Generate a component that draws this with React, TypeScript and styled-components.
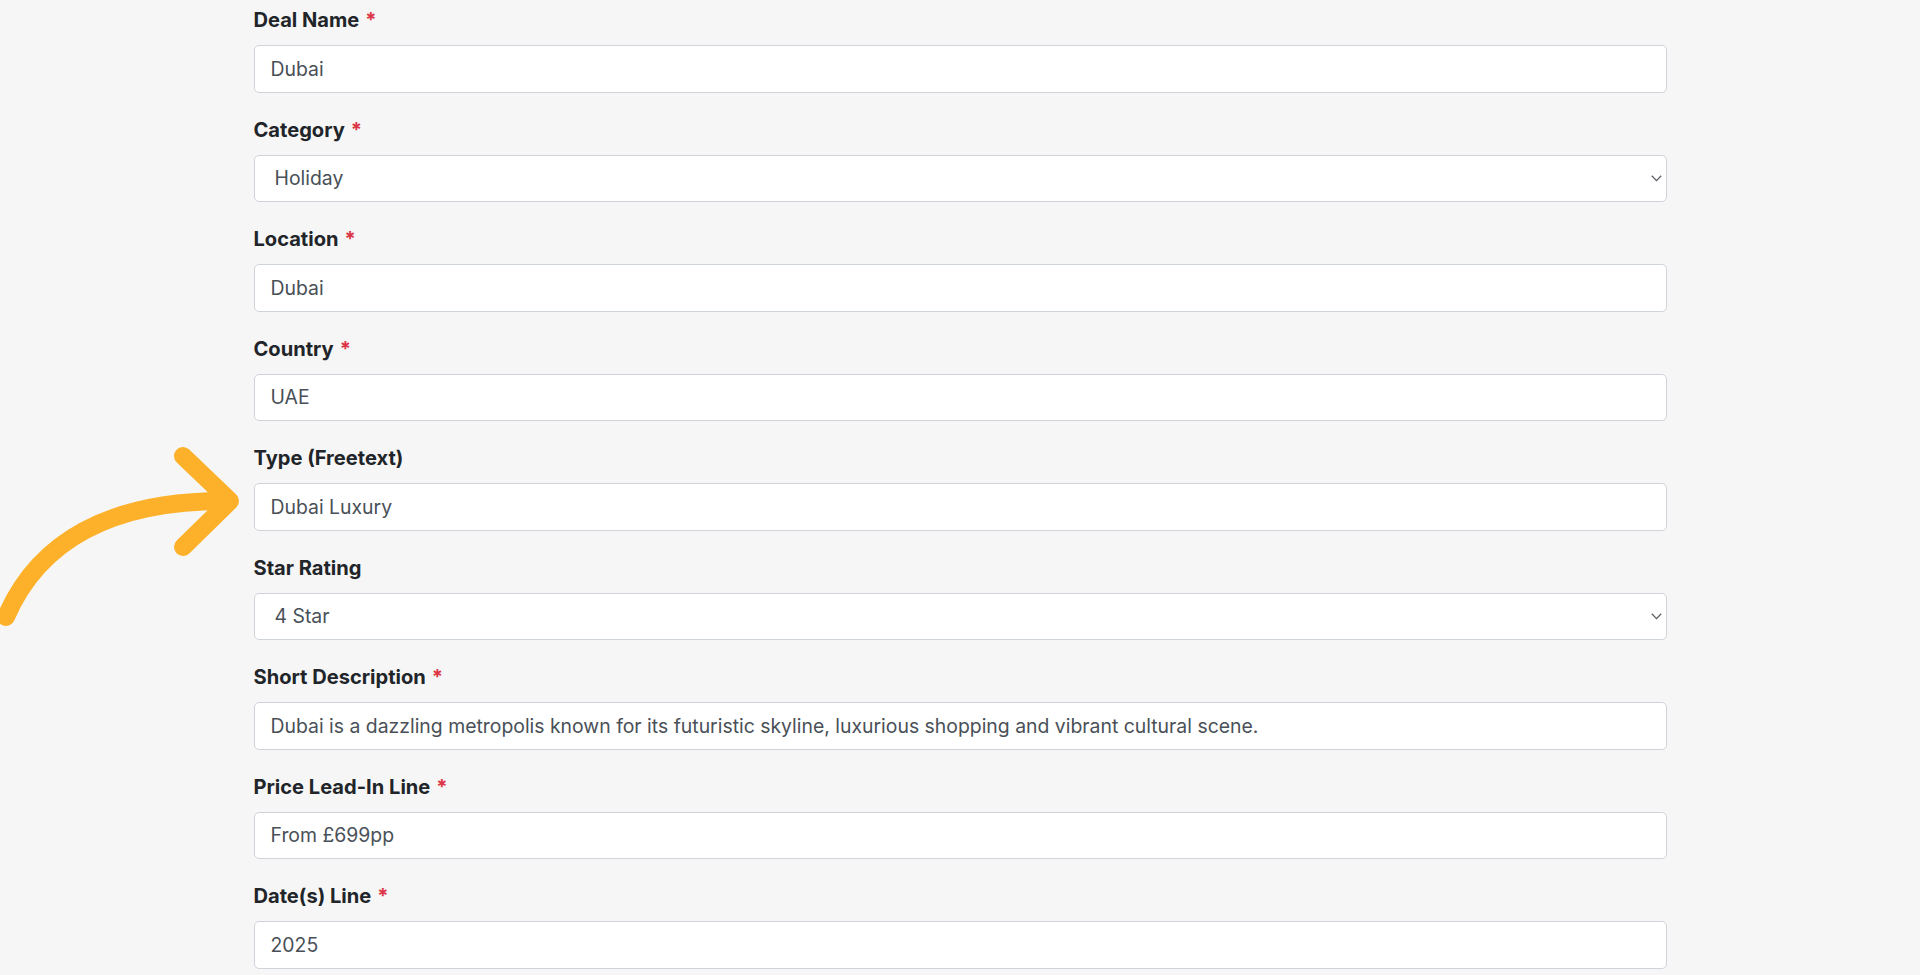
import React from 'react'
import styled, { createGlobalStyle } from 'styled-components'

const GlobalStyle = createGlobalStyle`
  html, body {
    margin: 0;
    padding: 0;
    height: 100%;
    overflow: hidden;
    background: #f6f6f6;
  }
  body {
    font-family: Inter, 'Noto Sans', 'Liberation Sans', sans-serif;
  }
`

type Field = {
  label: string
  value: string
  required?: boolean
  select?: boolean
}

const fields: Field[] = [
  { label: 'Deal Name', value: 'Dubai', required: true },
  { label: 'Category', value: 'Holiday', required: true, select: true },
  { label: 'Location', value: 'Dubai', required: true },
  { label: 'Country', value: 'UAE', required: true },
  { label: 'Type (Freetext)', value: 'Dubai Luxury' },
  { label: 'Star Rating', value: '4 Star', select: true },
  {
    label: 'Short Description',
    value:
      'Dubai is a dazzling metropolis known for its futuristic skyline, luxurious shopping and vibrant cultural scene.',
    required: true,
  },
  { label: 'Price Lead-In Line', value: 'From £699pp', required: true },
  { label: 'Date(s) Line', value: '2025', required: true },
]

function CurvedArrow() {
  return (
    <ArrowLayer width='260' height='640' viewBox='0 0 260 640'>
      <path
        d='M 6 617 C 38 542, 110 500, 228 501'
        fill='none'
        stroke='#fdb12a'
        strokeWidth='18'
        strokeLinecap='round'
      />
      <path
        d='M 183 456 L 230 501 L 183 547'
        fill='none'
        stroke='#fdb12a'
        strokeWidth='18'
        strokeLinecap='round'
        strokeLinejoin='round'
      />
    </ArrowLayer>
  )
}

function App() {
  return (
    <>
      <GlobalStyle />
      <Page>
        <CurvedArrow />
        <Form>
          {fields.map((f) => (
            <FormGroup key={f.label}>
              <Label>
                {f.label}
                {f.required && <Required>*</Required>}
              </Label>
              {f.select ? (
                <SelectWrap>
                  <Select defaultValue={f.value}>
                    <option>{f.value}</option>
                  </Select>
                  <Chevron width='11' height='7' viewBox='0 0 11 7'>
                    <path d='M 0.8 0.8 L 5.5 5.6 L 10.2 0.8' fill='none' stroke='#5a5f66' strokeWidth='1.3' />
                  </Chevron>
                </SelectWrap>
              ) : (
                <TextInput readOnly defaultValue={f.value} />
              )}
            </FormGroup>
          ))}
        </Form>
      </Page>
    </>
  )
}

export default App

const Page = styled.div`
  position: relative;
  min-height: 975px;
  padding-top: 6px;
  box-sizing: border-box;
`

const ArrowLayer = styled.svg`
  position: absolute;
  left: 0;
  top: 0;
  pointer-events: none;
`

const Form = styled.form`
  max-width: 1413px;
  margin: 0 auto;
`

const FormGroup = styled.div`
  margin-bottom: 22.8px;
`

const Label = styled.label`
  display: block;
  font-size: 20.1px;
  line-height: 29.4px;
  font-weight: 700;
  color: #212529;
  margin-bottom: 9.8px;
`

const Required = styled.span`
  color: #dc3545;
  margin-left: 6px;
`

const controlStyles = `
  display: block;
  width: 100%;
  box-sizing: border-box;
  height: 47.5px;
  font-family: Inter, 'Noto Sans', 'Liberation Sans', sans-serif;
  font-size: 19.4px;
  color: #495057;
  background: #ffffff;
  border: 1.2px solid #ced4da;
  border-radius: 5px;
  outline: none;
`

const TextInput = styled.input`
  ${controlStyles}
  padding: 0 16px;
`

const SelectWrap = styled.div`
  position: relative;
`

const Select = styled.select`
  ${controlStyles}
  padding: 0 30px 0 20px;
  appearance: none;
  -webkit-appearance: none;
`

const Chevron = styled.svg`
  position: absolute;
  right: 5px;
  top: 50%;
  margin-top: -3px;
  pointer-events: none;
`
